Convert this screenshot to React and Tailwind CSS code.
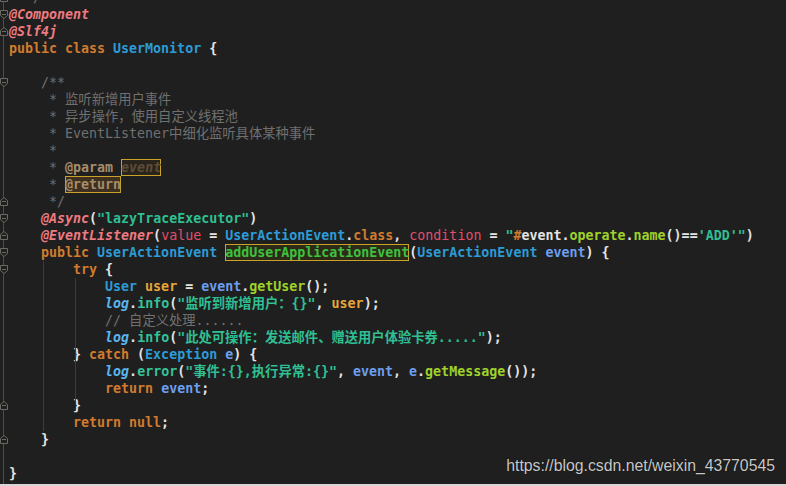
import React from "react";

const KW = "text-[#cf7c30] font-bold";
const ANN = "text-[#ee7b81] font-bold italic";
const TYPE = "text-[#2d9bd6] font-bold";
const CM = "text-[#707070]";
const TAG = "text-[#a58d6b] font-bold";
const STR = "text-[#2fbf93] font-bold";
const P = "text-[#e4e4e4] font-bold";
const ATTR = "text-[#e0506a]";
const METH = "text-[#9fd12c] font-bold";
const VB = "text-[#6c9ef0] font-bold";
const LOG = "text-[#5ab6ee] font-bold italic";
const LM = "text-[#36c29a] font-bold";
const LV = "text-[#e8a53a] font-bold";
const STRO = "text-[#cf7c30] font-bold";

const lines = [
  [["  */", CM]],
  [["@Component", ANN]],
  [["@Slf4j", ANN]],
  [["public class ", KW], ["UserMonitor", TYPE], [" {", P]],
  [],
  [["    /**", CM]],
  [["     * 监听新增用户事件", CM]],
  [["     * 异步操作，使用自定义线程池", CM]],
  [["     * EventListener中细化监听具体某种事件", CM]],
  [["     *", CM]],
  [["     * ", CM], ["@param", TAG], [" ", CM], ["event", "text-[#5e4b36] font-bold italic bg-[#2a251c]", "box"]],
  [["     * ", CM], ["@return", "text-[#a58d6b] font-bold bg-[#3e3020]", "box"]],
  [["     */", CM]],
  [["    ", P], ["@Async", ANN], ["(", P], ["\"lazyTraceExecutor\"", STR], [")", P]],
  [
    ["    ", P], ["@EventListener", ANN], ["(", P], ["value", ATTR], [" = ", P], ["UserActionEvent", TYPE],
    [".", P], ["class", KW], [", ", P], ["condition", ATTR], [" = ", P], ["\"", STR], ["#", STRO],
    ["event", P], [".", P], ["operate", METH], [".", P], ["name", METH], ["()==", P], ["'ADD'\"", STR], [")", P],
  ],
  [
    ["    ", P], ["public ", KW], ["UserActionEvent ", TYPE],
    ["addUserApplicationEvent", "text-[#3ec23e] font-bold bg-[#2e2a19]", "box"],
    ["(", P], ["UserActionEvent ", TYPE], ["event", VB], [") {", P],
  ],
  [["        ", P], ["try", KW], [" {", P]],
  [["            ", P], ["User ", TYPE], ["user", LV], [" = ", P], ["event", VB], [".", P], ["getUser", METH], ["();", P]],
  [["            ", P], ["log", LOG], [".", P], ["info", LM], ["(", P], ["\"监听到新增用户：{}\"", STR], [", ", P], ["user", LV], [");", P]],
  [["            // 自定义处理......", CM]],
  [["            ", P], ["log", LOG], [".", P], ["info", LM], ["(", P], ["\"此处可操作：发送邮件、赠送用户体验卡券.....\"", STR], [");", P]],
  [["        } ", P], ["catch", KW], [" (", P], ["Exception ", TYPE], ["e", VB], [") {", P]],
  [
    ["            ", P], ["log", LOG], [".", P], ["error", LM], ["(", P], ["\"事件:{},执行异常:{}\"", STR],
    [", ", P], ["event", VB], [", ", P], ["e", VB], [".", P], ["getMessage", METH], ["());", P],
  ],
  [["            ", P], ["return ", KW], ["event", VB], [";", P]],
  [["        }", P]],
  [["        ", P], ["return null", KW], [";", P]],
  [["    }", P]],
  [],
  [["}", P]],
  [["             //\u201c\u2026\u2026", CM]],
];

const folds = {
  0: "end",
  1: "start",
  2: "end",
  5: "start",
  12: "end",
  13: "start",
  14: "end",
  15: "start",
  16: "start",
  24: "end",
  26: "end",
};

function Fold({ type }) {
  const pts = type === "start" ? "0.5,0.5 7.5,0.5 7.5,5.5 4,8.5 0.5,5.5" : "0.5,8.5 7.5,8.5 7.5,3.5 4,0.5 0.5,3.5";
  return (
    <svg width="8" height="9" viewBox="0 0 8 9" className="block">
      <polygon points={pts} fill="#1f1f1f" stroke="#6b6b62" strokeWidth="1" />
      <line x1="2" y1="4.5" x2="6" y2="4.5" stroke="#6b6b62" strokeWidth="1" />
    </svg>
  );
}

function Line({ toks, fold }) {
  return (
    <div className="flex h-[17px] shrink-0">
      <div className="relative w-[9px] shrink-0">
        <div className="ml-[3px] h-full w-px bg-[#4e4e48]" />
        {fold && (
          <div className="absolute left-0 top-[4px]">
            <Fold type={fold} />
          </div>
        )}
      </div>
      <div className="whitespace-pre">
        {toks.map(([t, c, box], j) =>
          box ? (
            <span key={j} className={`inline-block h-[17px] align-top ring-1 ring-inset ring-[#c9a227] ${c}`}>
              {t}
            </span>
          ) : (
            <span key={j} className={c}>
              {t}
            </span>
          )
        )}
      </div>
    </div>
  );
}

export default function App() {
  return (
    <div className="relative flex h-[486px] w-[786px] flex-col overflow-hidden bg-[#1f1f1f]">
      <div className="relative min-h-0 flex-1 overflow-hidden">
        <div
          className="flex flex-col mt-[-11px] text-[13.3px] leading-[17px]"
          style={{ fontFamily: '"DejaVu Sans Mono", "Noto Sans CJK SC", monospace' }}
        >
          {lines.map((toks, i) => (
            <Line key={i} toks={toks} fold={folds[i]} />
          ))}
        </div>
        <div className="absolute left-[43px] top-[261px] h-[170px] w-px bg-[#3c3c3c]" />
        <div className="absolute left-[75px] top-[278px] h-[125px] w-px bg-[#3c3c3c]" />
      </div>
      <div className="h-[2px] shrink-0 bg-[#d6d6d6]" />
      <div
        className="absolute right-[11px] top-[457px] text-[15.8px] leading-[18px] text-[#c8c8c8]"
        style={{ fontFamily: '"Liberation Sans", Arial, sans-serif', textShadow: "0 0 1px #000" }}
      >
        https://blog.csdn.net/weixin_43770545
      </div>
    </div>
  );
}
